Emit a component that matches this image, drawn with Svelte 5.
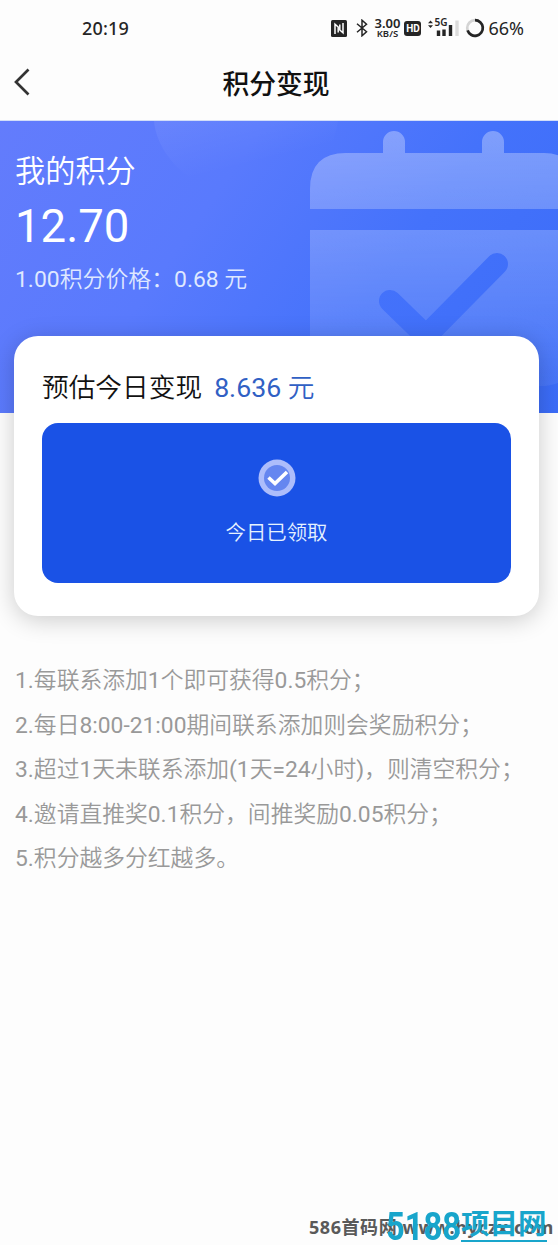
<script lang="ts">
	const points = "12.70";
	const price = "0.68";
	const estimate = "8.636";

	const rules = [
		"1.每联系添加1个即可获得0.5积分；",
		"2.每日8:00-21:00期间联系添加则会奖励积分；",
		"3.超过1天未联系添加(1天=24小时)，则清空积分；",
		"4.邀请直推奖0.1积分，间推奖励0.05积分；",
		"5.积分越多分红越多。"
	];

	// latin runs are set a little heavier than the hanzi
	function split(text: string): string[] {
		return text.split(/([\x20-\x7e]+)/).filter(Boolean);
	}

	function isLatin(part: string): boolean {
		return part.charCodeAt(0) < 127;
	}
</script>

<div class="page">
	<header class="status-bar">
		<span class="time">20:19</span>
		<div class="status-icons">
			<svg class="nfc" width="16" height="17" viewBox="0 0 16 17">
				<rect width="16" height="17" rx="1.5" fill="#252525" />
				<path d="M4 14V4.2L7.2 7v5.5M12 3v9.8L8.8 10V4.5" fill="none" stroke="#fff" stroke-width="1.5" />
			</svg>
			<svg class="bluetooth" width="12" height="18" viewBox="0 0 12 18">
				<path d="M1 4.8l9.5 8L6 16.8V1.2l4.5 4L1 13.2" fill="none" stroke="#252525" stroke-width="1.5" />
			</svg>
			<div class="speed">
				<span class="speed-value">3.00</span>
				<span class="speed-unit">KB/S</span>
			</div>
			<span class="hd">HD</span>
			<div class="signal">
				<svg width="33" height="18" viewBox="0 0 33 18">
					<path d="M0 4.3L2.5 1.5 5 4.3zM0 6.2L2.5 9 5 6.2z" fill="#252525" />
					<path d="M10.5 11.5v5.5M16 10.5v6.5M22.5 6v11" stroke="#252525" stroke-width="3.4" />
					<path d="M29 1.5v15.5" stroke="#dcdcdc" stroke-width="3.4" />
				</svg>
				<span class="network">5G</span>
			</div>
			<svg class="battery" width="20" height="20" viewBox="0 0 20 20">
				<circle cx="10" cy="10" r="7.8" fill="none" stroke="#d4d4d4" stroke-width="2.7" />
				<path d="M10 2.2A7.8 7.8 0 1 1 2.6 12.4" fill="none" stroke="#252525" stroke-width="2.7" />
			</svg>
			<span class="percent">66%</span>
		</div>
	</header>

	<nav class="nav-bar">
		<button class="back" aria-label="返回">
			<svg width="18" height="30" viewBox="0 0 18 30">
				<path d="M15.5 2.5L3 15l12.5 12.5" fill="none" stroke="#333" stroke-width="2.7" />
			</svg>
		</button>
		<h1>积分变现</h1>
	</nav>

	<section class="hero">
		<svg class="hero-art" width="558" height="292" viewBox="0 0 558 292">
			<defs>
				<linearGradient id="shine" x1="0" y1="0" x2="0" y2="1">
					<stop offset="0" stop-color="#fff" stop-opacity=".32" />
					<stop offset="1" stop-color="#fff" stop-opacity=".06" />
				</linearGradient>
				<linearGradient id="bubble" x1="0" y1="0" x2=".6" y2="1">
					<stop offset="0" stop-color="#fff" stop-opacity=".07" />
					<stop offset=".65" stop-color="#fff" stop-opacity="0" />
				</linearGradient>
				<mask id="tick">
					<rect width="600" height="300" fill="#fff" />
					<path d="M390 180l36 35 71-72" fill="none" stroke="#000" stroke-width="22" stroke-linecap="round" stroke-linejoin="round" />
				</mask>
			</defs>
			<path d="M154 0c3 35 40 76 101 76S330 40 338 0z" fill="url(#bubble)" />
			<path
				d="M310 88V68q0-36 36-36h37V21a11 11 0 0 1 22 0v11h77V21a11 11 0 0 1 22 0v11h40q32 0 32 36v20zM310 109h266v120q0 36-36 36H346q-36 0-36-36z"
				fill="url(#shine)"
				mask="url(#tick)"
			/>
		</svg>
		<div class="hero-content">
			<div class="hero-title">我的积分</div>
			<div class="hero-points latin">{points}</div>
			<div class="hero-price"><span class="latin">1.00</span>积分价格：<span class="latin">{price}</span> 元</div>
		</div>
	</section>

	<section class="card">
		<div class="estimate">
			<span>预估今日变现</span>
			<span class="amount"><span class="latin">{estimate}</span> 元</span>
		</div>
		<button class="claim">
			<svg width="38" height="38" viewBox="0 0 38 38">
				<circle cx="19" cy="19" r="18.5" fill="#adbdfb" />
				<circle cx="19" cy="19" r="13" fill="#6586f0" />
				<path d="M10.5 18.5l6.5 6 12-11.5" fill="none" stroke="#fff" stroke-width="3.6" />
			</svg>
			<span>今日已领取</span>
		</button>
	</section>

	<div class="rules">
		{#each rules as rule}
			<p>{#each split(rule) as part}<span class:latin={isLatin(part)}>{part}</span>{/each}</p>
		{/each}
	</div>

	<footer class="watermark">
		<span class="site">586首码网 www.hyczx.com</span>
		<span class="brand"><b>5188</b><i>项目网</i></span>
	</footer>
</div>

<style>
	:global(body) {
		background: #fdfdfd;
	}

	.page {
		height: 1245px;
		display: flex;
		flex-direction: column;
		position: relative;
		overflow: hidden;
		background: #fdfdfd;
		font-family: Roboto, "Noto Sans CJK SC", sans-serif;
	}

	.latin {
		font-weight: 400;
	}

	.status-bar {
		height: 56px;
		box-sizing: border-box;
		padding: 0 34px 0 82px;
		display: flex;
		justify-content: space-between;
		align-items: center;
		color: #252525;
	}

	.time {
		font: 500 18px "Noto Sans", sans-serif;
		letter-spacing: 0.2px;
	}

	.status-icons {
		display: flex;
		align-items: center;
	}

	.bluetooth {
		margin-left: 9px;
	}

	.speed {
		width: 30px;
		margin-left: 4px;
		display: flex;
		flex-direction: column;
		align-items: center;
		font-family: "Noto Sans", sans-serif;
		font-weight: 600;
	}

	.speed-value {
		font-size: 13px;
		line-height: 11px;
	}

	.speed-unit {
		font-size: 9.5px;
		line-height: 9px;
	}

	.hd {
		width: 17px;
		height: 15px;
		margin-left: 2px;
		border-radius: 3px;
		background: #252525;
		color: #fff;
		font-size: 10px;
		font-weight: 700;
		line-height: 15px;
		text-align: center;
	}

	.signal {
		height: 18px;
		margin-left: 7px;
		position: relative;
	}

	.network {
		position: absolute;
		top: -3px;
		left: 6px;
		font: 600 10px/13px "Noto Sans", sans-serif;
	}

	.battery {
		margin-left: 4px;
	}

	.percent {
		margin-left: 3px;
		font: 450 18px "Noto Sans", sans-serif;
	}

	.nav-bar {
		height: 65px;
		box-sizing: border-box;
		display: grid;
		grid-template-columns: 48px 1fr 54px;
		align-items: center;
		padding-bottom: 12px;
		border-bottom: 1px solid #d3def8;
	}

	.back {
		height: 30px;
		padding: 0 0 0 13px;
		border: none;
		background: none;
		text-align: left;
	}

	h1 {
		margin: 0;
		padding-top: 5px;
		color: #111;
		font-size: 26.8px;
		font-weight: 500;
		line-height: 40px;
		text-align: center;
	}

	.hero {
		height: 292px;
		flex: none;
		position: relative;
		background: linear-gradient(125deg, #637cfc 0%, #597afd 35%, #4472fb 65%, #3b6cf8 100%);
	}

	.hero-art {
		position: absolute;
		top: 0;
		left: 0;
	}

	.hero-content {
		position: relative;
		padding: 29px 15px 0;
		color: #fff;
		font-weight: 350;
	}

	.hero-title {
		font-size: 30.2px;
		line-height: 44px;
	}

	.hero-points {
		font-size: 45.5px;
		line-height: 65px;
	}

	.hero-price {
		font-size: 22.9px;
		line-height: 42px;
		color: #dfe8ff;
	}

	.card {
		width: 525px;
		height: 280px;
		box-sizing: border-box;
		margin: -77px 0 0 14px;
		padding: 28px 28px 0 28px;
		position: relative;
		flex: none;
		border-radius: 24px;
		background: #fff;
		box-shadow: 0 4px 24px rgba(0, 0, 0, 0.2);
	}

	.estimate {
		height: 59px;
		display: flex;
		gap: 12px;
		color: #111;
		font-size: 26.7px;
		font-weight: 350;
		line-height: 49px;
	}

	.amount {
		color: #3060c4;
	}

	.claim {
		width: 469px;
		height: 160px;
		padding: 0;
		display: flex;
		flex-direction: column;
		justify-content: center;
		align-items: center;
		gap: 21px;
		border: none;
		border-radius: 16px;
		background: #1a52e6;
		color: #e6f2ff;
		font-family: inherit;
		font-size: 20.4px;
		font-weight: 350;
		line-height: 30px;
	}

	.rules {
		padding: 43px 15px 0;
		color: #999;
		font-size: 22.8px;
		font-weight: 350;
	}

	.rules p {
		margin: 0;
		line-height: 44.6px;
		white-space: nowrap;
	}

	.watermark {
		position: absolute;
		right: 0;
		bottom: 0;
		width: 250px;
		height: 36px;
	}

	.site {
		position: absolute;
		top: 5px;
		left: 1px;
		color: #5a5a5a;
		font: 700 18px/26px "Noto Sans", "Noto Sans CJK SC", sans-serif;
		letter-spacing: 0.55px;
		white-space: nowrap;
	}

	.brand {
		position: absolute;
		top: 0;
		left: 78px;
		display: flex;
		align-items: flex-start;
		height: 36px;
		color: #18a5cb;
		white-space: nowrap;
	}

	.brand b {
		width: 75px;
		font-size: 38px;
		line-height: 36px;
		transform: scaleX(0.86);
		transform-origin: left;
	}

	.brand i {
		height: 31px;
		border-bottom: 2px solid #18a5cb;
		font-size: 28.5px;
		font-style: normal;
		font-weight: 700;
		line-height: 31px;
	}
</style>
